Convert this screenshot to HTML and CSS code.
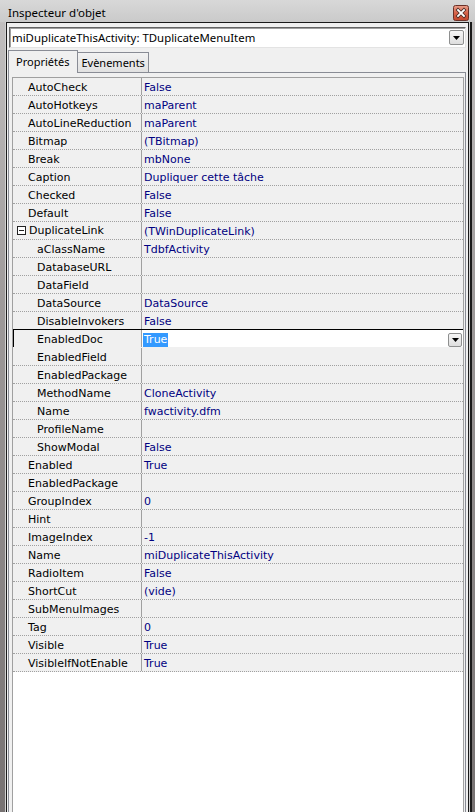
FILE: index.html
```html
<!DOCTYPE html>
<html>
<head>
    <title>Inspecteur d'objet</title>
    <link rel="stylesheet" href="styles.css">
</head>
<body>
    <div class="window">
        <div class="titlebar">
            <span class="title">Inspecteur d'objet</span>
            <span class="close">
                <svg width="16" height="16" viewBox="0 0 16 16">
                    <defs>
                        <linearGradient id="cg" x1="0" y1="0" x2="0" y2="1">
                            <stop offset="0" stop-color="#eaa08c"/>
                            <stop offset="0.5" stop-color="#d6634a"/>
                            <stop offset="1" stop-color="#c4452b"/>
                        </linearGradient>
                    </defs>
                    <rect x="0.5" y="0.5" width="15" height="15" rx="2" fill="url(#cg)" stroke="#6b3128"/>
                    <path d="M5 5 L11 11 M11 5 L5 11" stroke="#4a2a24" stroke-width="3.4" stroke-linecap="square"/>
                    <path d="M5 5 L11 11 M11 5 L5 11" stroke="#fff" stroke-width="1.8" stroke-linecap="square"/>
                </svg>
            </span>
        </div>
        <div class="client">
            <div class="combo">
                <span class="combo-text">miDuplicateThisActivity: TDuplicateMenuItem</span>
                <span class="drop"><svg width="7" height="4" viewBox="0 0 7 4"><path d="M0 0 H7 L3.5 4 Z" fill="#000"/></svg></span>
            </div>
            <div class="tabs">
                <div class="tab active">Propriétés</div>
                <div class="tab">Evènements</div>
            </div>
            <div class="page">
                <div class="grid">
                    <div class="row"><div class="name">AutoCheck</div><div class="val">False</div></div>
                    <div class="row"><div class="name">AutoHotkeys</div><div class="val">maParent</div></div>
                    <div class="row"><div class="name">AutoLineReduction</div><div class="val">maParent</div></div>
                    <div class="row"><div class="name">Bitmap</div><div class="val">(TBitmap)</div></div>
                    <div class="row"><div class="name">Break</div><div class="val">mbNone</div></div>
                    <div class="row"><div class="name">Caption</div><div class="val">Dupliquer cette tâche</div></div>
                    <div class="row"><div class="name">Checked</div><div class="val">False</div></div>
                    <div class="row"><div class="name">Default</div><div class="val">False</div></div>
                    <div class="row"><div class="name expander"><span class="box"></span>DuplicateLink</div><div class="val">(TWinDuplicateLink)</div></div>
                    <div class="row"><div class="name child">aClassName</div><div class="val">TdbfActivity</div></div>
                    <div class="row"><div class="name child">DatabaseURL</div><div class="val"></div></div>
                    <div class="row"><div class="name child">DataField</div><div class="val"></div></div>
                    <div class="row"><div class="name child">DataSource</div><div class="val">DataSource</div></div>
                    <div class="row"><div class="name child">DisableInvokers</div><div class="val">False</div></div>
                    <div class="row sel">
                        <div class="name child">EnabledDoc</div>
                        <div class="val edit">
                            <span class="hl">True</span>
                            <span class="drop small"><svg width="7" height="4" viewBox="0 0 7 4"><path d="M0 0 H7 L3.5 4 Z" fill="#000"/></svg></span>
                        </div>
                    </div>
                    <div class="row"><div class="name child">EnabledField</div><div class="val"></div></div>
                    <div class="row"><div class="name child">EnabledPackage</div><div class="val"></div></div>
                    <div class="row"><div class="name child">MethodName</div><div class="val">CloneActivity</div></div>
                    <div class="row"><div class="name child">Name</div><div class="val">fwactivity.dfm</div></div>
                    <div class="row"><div class="name child">ProfileName</div><div class="val"></div></div>
                    <div class="row"><div class="name child">ShowModal</div><div class="val">False</div></div>
                    <div class="row"><div class="name">Enabled</div><div class="val">True</div></div>
                    <div class="row"><div class="name">EnabledPackage</div><div class="val"></div></div>
                    <div class="row"><div class="name">GroupIndex</div><div class="val">0</div></div>
                    <div class="row"><div class="name">Hint</div><div class="val"></div></div>
                    <div class="row"><div class="name">ImageIndex</div><div class="val">-1</div></div>
                    <div class="row"><div class="name">Name</div><div class="val">miDuplicateThisActivity</div></div>
                    <div class="row"><div class="name">RadioItem</div><div class="val">False</div></div>
                    <div class="row"><div class="name">ShortCut</div><div class="val">(vide)</div></div>
                    <div class="row"><div class="name">SubMenuImages</div><div class="val"></div></div>
                    <div class="row"><div class="name">Tag</div><div class="val">0</div></div>
                    <div class="row"><div class="name">Visible</div><div class="val">True</div></div>
                    <div class="row"><div class="name">VisibleIfNotEnable</div><div class="val">True</div></div>
                </div>
            </div>
        </div>
    </div>
</body>
</html>
```

FILE: styles.css
```css
body {
    margin: 0;
    background-color: #8a8585;
    font-family: "DejaVu Sans", sans-serif;
}

.window {
    width: 475px;
    height: 812px;
    display: flex;
    flex-direction: column;
    overflow: hidden;
    background: linear-gradient(to bottom, #c4c2c2 0, #9e9a9a 300px, #777272 812px);
}

.titlebar {
    height: 22px;
    flex-shrink: 0;
    display: flex;
    justify-content: space-between;
    align-items: flex-start;
    padding: 0 6px 0 8px;
    background: linear-gradient(to bottom, #d8d8d8, #cacaca);
}

.title {
    font-family: "Noto Sans", sans-serif;
    font-size: 11.5px;
    line-height: 16px;
    padding-top: 5px;
    color: #000;
}

.close {
    display: flex;
    padding-top: 5px;
}

.client {
    flex: 1;
    min-height: 0;
    display: flex;
    flex-direction: column;
    margin: 0 6px;
    border: 1px solid #1a1a1a;
    border-bottom: none;
    background-color: #f0f0f0;
    box-shadow: 1px 0 0 #d0d0d0, 3px 0 0 #1a1a1a, -1px 0 0 #d0d0d0;
}

.combo {
    height: 21px;
    flex-shrink: 0;
    box-sizing: border-box;
    margin: 4px 2px 0 2px;
    display: flex;
    align-items: center;
    justify-content: space-between;
    background-color: #fff;
    border-top: 1px solid #646464;
    border-left: 1px solid #646464;
    border-right: 1px solid #e3e3e3;
    border-bottom: 1px solid #e3e3e3;
    box-shadow: inset 1px 1px 0 #a0a0a0;
    padding: 0 1px 0 2px;
}

.combo-text {
    font-family: "Noto Sans", sans-serif;
    font-size: 11.4px;
    color: #000;
}

.drop {
    width: 15px;
    height: 15px;
    box-sizing: border-box;
    display: flex;
    align-items: center;
    justify-content: center;
    border: 1px solid #8e8f8f;
    border-radius: 2px;
    background: linear-gradient(to bottom, #f6f6f6, #dedede);
}

.drop.small {
    width: 14px;
    height: 14px;
    margin-right: 1px;
}

.tabs {
    height: 22px;
    flex-shrink: 0;
    display: flex;
    align-items: flex-end;
    margin: 2px 0 0 1px;
    position: relative;
    z-index: 1;
}

.tab {
    height: 20px;
    box-sizing: border-box;
    border: 1px solid #898c95;
    border-bottom: none;
    border-left: none;
    padding: 2px 3px 0 3px;
    font-family: "Noto Sans", sans-serif;
    font-size: 11px;
    color: #000;
    background: linear-gradient(to bottom, #f2f2f2, #e1e1e1);
}

.tab.active {
    height: 23px;
    margin-bottom: -1px;
    border-left: 1px solid #898c95;
    padding: 3px 8px 0 7px;
    background: #f0f0f0;
}

.page {
    flex: 1;
    min-height: 0;
    display: flex;
    margin: 0 2px 0 1px;
    border: 1px solid #898c95;
    border-bottom: none;
    padding: 4px 1px 0 3px;
    background-color: #f0f0f0;
}

.grid {
    flex: 1;
    border: 1px solid #a0a0a0;
    border-bottom: none;
    background-color: #fff;
    font-size: 11px;
}

.row {
    height: 17px;
    display: flex;
    border-bottom: 1px dotted #a0a0a0;
    background-color: #f0f0f0;
    line-height: 19px;
}

.name {
    width: 129px;
    flex-shrink: 0;
    padding-left: 15px;
    box-sizing: border-box;
    border-right: 1px solid #a0a0a0;
    color: #000;
    white-space: nowrap;
}

.name.child {
    padding-left: 24px;
}

.name.expander {
    padding-left: 4px;
    display: flex;
    align-items: center;
}

.box {
    width: 9px;
    height: 9px;
    box-sizing: border-box;
    border: 1px solid #222;
    margin-right: 3px;
    background: linear-gradient(#222, #222) center / 5px 1px no-repeat, #fff;
}

.val {
    flex: 1;
    padding-left: 2px;
    color: #000080;
    white-space: nowrap;
}

.row.sel {
    height: 17px;
    border-bottom: none;
    border-top: 1px solid #000;
    margin-top: -1px;
    padding-bottom: 1px;
}

.row.sel .name {
    box-shadow: inset 1px 0 0 #000;
}

.val.edit {
    background-color: #fff;
    display: flex;
    align-items: flex-end;
    justify-content: space-between;
    padding-left: 1px;
}

.hl {
    background-color: #3399ff;
    color: #fff;
    line-height: 14px;
    padding: 0 1px;
}
```
